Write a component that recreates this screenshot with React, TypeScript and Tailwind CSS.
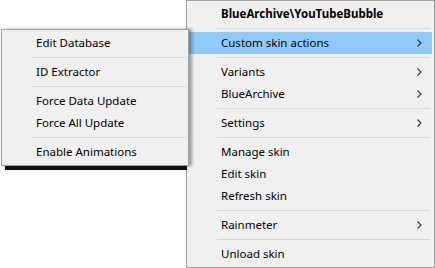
import React from "react";

const font = { fontFamily: '"Segoe UI", "Noto Sans", sans-serif' };

type Entry = { label?: string; sep?: boolean; sub?: boolean; bold?: boolean; active?: boolean };

const mainItems: Entry[] = [
  { label: "BlueArchive\\YouTubeBubble", bold: true },
  { sep: true },
  { label: "Custom skin actions", sub: true, active: true },
  { sep: true },
  { label: "Variants", sub: true },
  { label: "BlueArchive", sub: true },
  { sep: true },
  { label: "Settings", sub: true },
  { sep: true },
  { label: "Manage skin" },
  { label: "Edit skin" },
  { label: "Refresh skin" },
  { sep: true },
  { label: "Rainmeter", sub: true },
  { sep: true },
  { label: "Unload skin" },
];

const subItems: Entry[] = [
  { label: "Edit Database" },
  { sep: true },
  { label: "ID Extractor" },
  { sep: true },
  { label: "Force Data Update" },
  { label: "Force All Update" },
  { sep: true },
  { label: "Enable Animations" },
];

function Chevron() {
  return (
    <svg width="5" height="8" viewBox="0 0 5 8" className="shrink-0">
      <polyline points="0.5,0.5 4,4 0.5,7.5" fill="none" stroke="#333" strokeWidth="1.1" />
    </svg>
  );
}

function MenuList({ items, sepRight }: { items: Entry[]; sepRight: string }) {
  return (
    <div className="flex flex-col">
      {items.map((it, i) =>
        it.sep ? (
          <div key={i} className="h-[7px] flex items-center">
            <div className={`h-px bg-[#d7d7d7] ml-[28px] flex-1 ${sepRight}`} />
          </div>
        ) : (
          <div
            key={i}
            className={`h-[22px] flex items-center pl-[32px] pr-[10px] text-[11.5px] text-black ${
              it.active ? "bg-[#91c9f7]" : ""
            } ${it.bold ? "font-bold" : ""}`}
          >
            <span className="flex-1 whitespace-nowrap">{it.label}</span>
            {it.sub && <Chevron />}
          </div>
        )
      )}
    </div>
  );
}

export default function App() {
  return (
    <div className="relative w-[435px] h-[268px] bg-white overflow-hidden" style={font}>
      {/* main context menu */}
      <div className="ml-[186px] w-[249px] h-[268px] bg-[#f0f0f0] border border-[#a0a0a0] p-[2px]">
        <MenuList items={mainItems} sepRight="mr-[2px]" />
      </div>

      {/* custom skin actions submenu */}
      <div className="absolute left-[1px] top-[29px] w-[188px]">
        <div className="bg-[#f0f0f0] border border-[#a0a0a0] p-[2px] shadow-[3px_0_3px_rgba(0,0,0,0.35)]">
          <MenuList items={subItems} sepRight="mr-0" />
        </div>
        <div className="ml-[4px] mr-[2px] h-[4px] bg-[#111]" />
      </div>
    </div>
  );
}
